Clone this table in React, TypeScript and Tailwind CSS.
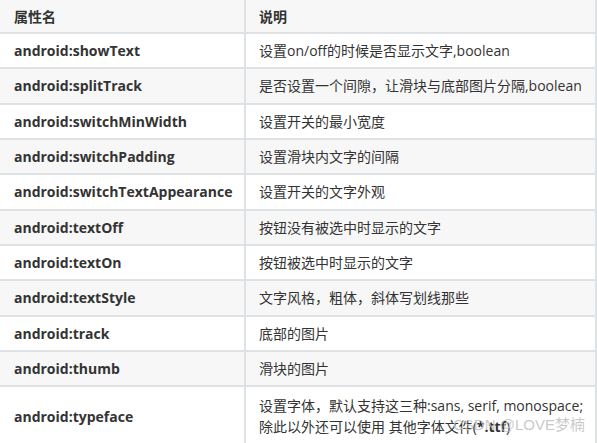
import React from "react";

type Row = { name: string; desc: React.ReactNode };

const rows: Row[] = [
  { name: "android:showText", desc: "设置on/off的时候是否显示文字,boolean" },
  { name: "android:splitTrack", desc: "是否设置一个间隙，让滑块与底部图片分隔,boolean" },
  { name: "android:switchMinWidth", desc: "设置开关的最小宽度" },
  { name: "android:switchPadding", desc: "设置滑块内文字的间隔" },
  { name: "android:switchTextAppearance", desc: "设置开关的文字外观" },
  { name: "android:textOff", desc: "按钮没有被选中时显示的文字" },
  { name: "android:textOn", desc: "按钮被选中时显示的文字" },
  { name: "android:textStyle", desc: "文字风格，粗体，斜体写划线那些" },
  { name: "android:track", desc: "底部的图片" },
  { name: "android:thumb", desc: "滑块的图片" },
];

const font = "font-['Open_Sans','Noto_Sans_CJK_SC',sans-serif]";

const App = () => {
  return (
    <div className={`w-[597px] h-[443px] overflow-hidden bg-white text-[14px] text-[#333] ${font}`}>
      <div className="border-r-2 border-[#dfe2e5]">
        {/*header*/}
        <div className="flex h-[34px] bg-[#f7f7f7] border-b-2 border-[#dfe2e5] font-bold">
          <div className="w-[246px] border-r-2 border-[#dfe2e5] pl-[14px] flex items-center">属性名</div>
          <div className="flex-1 pl-[13px] flex items-center">说明</div>
        </div>
        {/*body*/}
        {rows.map((r, i) => (
          <div
            key={r.name}
            className={`flex h-[35.33px] border-b-2 border-[#dfe2e5] ${i % 2 === 1 ? "bg-[#f7f7f7]" : "bg-white"}`}
          >
            <div className="w-[246px] border-r-2 border-[#dfe2e5] pl-[14px] flex items-center font-bold">
              {r.name}
            </div>
            <div className="flex-1 pl-[13px] flex items-center">{r.desc}</div>
          </div>
        ))}
        <div className="flex h-[58px] bg-white">
          <div className="w-[246px] border-r-2 border-[#dfe2e5] pl-[14px] flex items-center font-bold">
            android:typeface
          </div>
          <div className="relative flex-1 pl-[13px] py-[8px] leading-[21px]">
            <div>设置字体，默认支持这三种:sans, serif, monospace;</div>
            <div>
              除此以外还可以使用 其他字体文件(<b>*.ttf</b>)
            </div>
            {/*watermark*/}
            <div className="absolute left-[207px] top-[28px] whitespace-nowrap leading-[20px] text-[15px] text-[#c0c0c0]/85 font-['Liberation_Sans','Noto_Sans_CJK_SC',sans-serif]">
              CSDN @LOVE梦楠
            </div>
          </div>
        </div>
      </div>
    </div>
  );
};

export default App;
